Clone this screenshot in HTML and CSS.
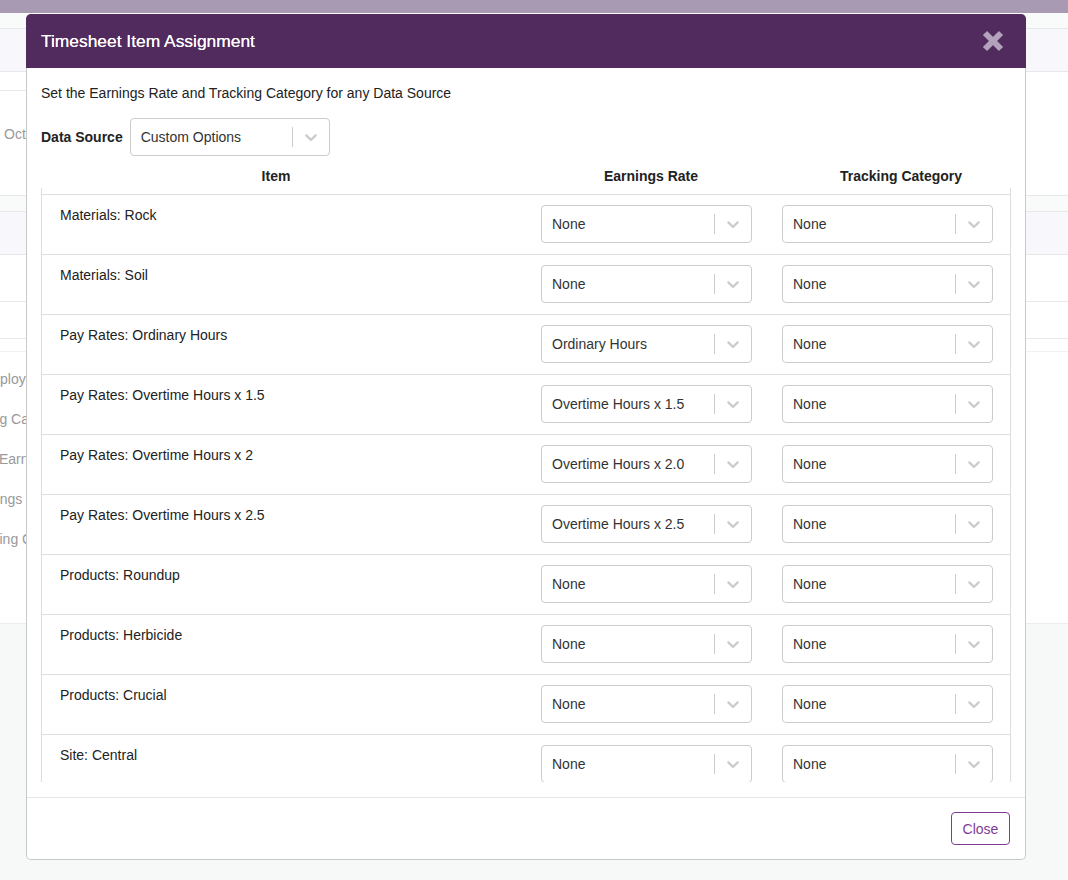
FILE: index.html
```html
<!DOCTYPE html>
<html lang="en">
<head>
  <meta charset="UTF-8" />
  <title>Timesheet Item Assignment</title>
  <link rel="stylesheet" href="styles.css">
</head>
<body>
  <div class="page">
    <div class="nav"></div>
    <div class="strip"></div>
    <div class="panel"></div>
    <div class="section">
      <div class="sub"></div>
      <div class="date">Oct</div>
    </div>
    <div class="strip"></div>
    <div class="panel"></div>
    <div class="line-row tall"></div>
    <div class="line-row"></div>
    <div class="line-row thin"></div>
    <div class="labels">
      <div class="lbl lbl-1">Employee</div>
      <div class="lbl lbl-2">Tracking Category</div>
      <div class="lbl lbl-3">Earnings</div>
      <div class="lbl lbl-4">Earnings Rate</div>
      <div class="lbl lbl-5">Tracking Category</div>
    </div>
    <div class="page-foot"></div>

    <div class="modal">
      <div class="modal-header">
        <span class="modal-title">Timesheet Item Assignment</span>
        <svg class="close-x" viewBox="0 0 22 22" width="22" height="22">
          <path d="M3 3 L19 19 M19 3 L3 19" stroke="currentColor" stroke-width="6" />
        </svg>
      </div>

      <div class="modal-body">
        <div class="desc">Set the Earnings Rate and Tracking Category for any Data Source</div>

        <div class="source-row">
          <span class="source-label">Data Source</span>
          <div class="select source-select">
            <span class="select-value">Custom Options</span>
            <span class="select-sep"></span>
            <span class="select-arrow"><svg viewBox="0 0 20 20" width="20" height="20"><path d="M4.516 7.548c0.436-0.446 1.043-0.481 1.576 0l3.908 3.747 3.908-3.747c0.533-0.481 1.141-0.446 1.574 0 0.436 0.445 0.408 1.197 0 1.615-0.406 0.418-4.695 4.502-4.695 4.502-0.217 0.223-0.502 0.335-0.787 0.335s-0.57-0.112-0.789-0.335c0 0-4.287-4.084-4.695-4.502s-0.436-1.17 0-1.615z"/></svg></span>
          </div>
        </div>

        <div class="table-head">
          <div>Item</div>
          <div>Earnings Rate</div>
          <div>Tracking Category</div>
        </div>

        <div class="table-body">
          <div class="row">
            <div class="item">Materials: Rock</div>
            <div class="select"><span class="select-value">None</span><span class="select-sep"></span><span class="select-arrow"><svg viewBox="0 0 20 20" width="20" height="20"><path d="M4.516 7.548c0.436-0.446 1.043-0.481 1.576 0l3.908 3.747 3.908-3.747c0.533-0.481 1.141-0.446 1.574 0 0.436 0.445 0.408 1.197 0 1.615-0.406 0.418-4.695 4.502-4.695 4.502-0.217 0.223-0.502 0.335-0.787 0.335s-0.57-0.112-0.789-0.335c0 0-4.287-4.084-4.695-4.502s-0.436-1.17 0-1.615z"/></svg></span></div>
            <div class="select"><span class="select-value">None</span><span class="select-sep"></span><span class="select-arrow"><svg viewBox="0 0 20 20" width="20" height="20"><path d="M4.516 7.548c0.436-0.446 1.043-0.481 1.576 0l3.908 3.747 3.908-3.747c0.533-0.481 1.141-0.446 1.574 0 0.436 0.445 0.408 1.197 0 1.615-0.406 0.418-4.695 4.502-4.695 4.502-0.217 0.223-0.502 0.335-0.787 0.335s-0.57-0.112-0.789-0.335c0 0-4.287-4.084-4.695-4.502s-0.436-1.17 0-1.615z"/></svg></span></div>
          </div>
          <div class="row">
            <div class="item">Materials: Soil</div>
            <div class="select"><span class="select-value">None</span><span class="select-sep"></span><span class="select-arrow"><svg viewBox="0 0 20 20" width="20" height="20"><path d="M4.516 7.548c0.436-0.446 1.043-0.481 1.576 0l3.908 3.747 3.908-3.747c0.533-0.481 1.141-0.446 1.574 0 0.436 0.445 0.408 1.197 0 1.615-0.406 0.418-4.695 4.502-4.695 4.502-0.217 0.223-0.502 0.335-0.787 0.335s-0.57-0.112-0.789-0.335c0 0-4.287-4.084-4.695-4.502s-0.436-1.17 0-1.615z"/></svg></span></div>
            <div class="select"><span class="select-value">None</span><span class="select-sep"></span><span class="select-arrow"><svg viewBox="0 0 20 20" width="20" height="20"><path d="M4.516 7.548c0.436-0.446 1.043-0.481 1.576 0l3.908 3.747 3.908-3.747c0.533-0.481 1.141-0.446 1.574 0 0.436 0.445 0.408 1.197 0 1.615-0.406 0.418-4.695 4.502-4.695 4.502-0.217 0.223-0.502 0.335-0.787 0.335s-0.57-0.112-0.789-0.335c0 0-4.287-4.084-4.695-4.502s-0.436-1.17 0-1.615z"/></svg></span></div>
          </div>
          <div class="row">
            <div class="item">Pay Rates: Ordinary Hours</div>
            <div class="select"><span class="select-value">Ordinary Hours</span><span class="select-sep"></span><span class="select-arrow"><svg viewBox="0 0 20 20" width="20" height="20"><path d="M4.516 7.548c0.436-0.446 1.043-0.481 1.576 0l3.908 3.747 3.908-3.747c0.533-0.481 1.141-0.446 1.574 0 0.436 0.445 0.408 1.197 0 1.615-0.406 0.418-4.695 4.502-4.695 4.502-0.217 0.223-0.502 0.335-0.787 0.335s-0.57-0.112-0.789-0.335c0 0-4.287-4.084-4.695-4.502s-0.436-1.17 0-1.615z"/></svg></span></div>
            <div class="select"><span class="select-value">None</span><span class="select-sep"></span><span class="select-arrow"><svg viewBox="0 0 20 20" width="20" height="20"><path d="M4.516 7.548c0.436-0.446 1.043-0.481 1.576 0l3.908 3.747 3.908-3.747c0.533-0.481 1.141-0.446 1.574 0 0.436 0.445 0.408 1.197 0 1.615-0.406 0.418-4.695 4.502-4.695 4.502-0.217 0.223-0.502 0.335-0.787 0.335s-0.57-0.112-0.789-0.335c0 0-4.287-4.084-4.695-4.502s-0.436-1.17 0-1.615z"/></svg></span></div>
          </div>
          <div class="row">
            <div class="item">Pay Rates: Overtime Hours x 1.5</div>
            <div class="select"><span class="select-value">Overtime Hours x 1.5</span><span class="select-sep"></span><span class="select-arrow"><svg viewBox="0 0 20 20" width="20" height="20"><path d="M4.516 7.548c0.436-0.446 1.043-0.481 1.576 0l3.908 3.747 3.908-3.747c0.533-0.481 1.141-0.446 1.574 0 0.436 0.445 0.408 1.197 0 1.615-0.406 0.418-4.695 4.502-4.695 4.502-0.217 0.223-0.502 0.335-0.787 0.335s-0.57-0.112-0.789-0.335c0 0-4.287-4.084-4.695-4.502s-0.436-1.17 0-1.615z"/></svg></span></div>
            <div class="select"><span class="select-value">None</span><span class="select-sep"></span><span class="select-arrow"><svg viewBox="0 0 20 20" width="20" height="20"><path d="M4.516 7.548c0.436-0.446 1.043-0.481 1.576 0l3.908 3.747 3.908-3.747c0.533-0.481 1.141-0.446 1.574 0 0.436 0.445 0.408 1.197 0 1.615-0.406 0.418-4.695 4.502-4.695 4.502-0.217 0.223-0.502 0.335-0.787 0.335s-0.57-0.112-0.789-0.335c0 0-4.287-4.084-4.695-4.502s-0.436-1.17 0-1.615z"/></svg></span></div>
          </div>
          <div class="row">
            <div class="item">Pay Rates: Overtime Hours x 2</div>
            <div class="select"><span class="select-value">Overtime Hours x 2.0</span><span class="select-sep"></span><span class="select-arrow"><svg viewBox="0 0 20 20" width="20" height="20"><path d="M4.516 7.548c0.436-0.446 1.043-0.481 1.576 0l3.908 3.747 3.908-3.747c0.533-0.481 1.141-0.446 1.574 0 0.436 0.445 0.408 1.197 0 1.615-0.406 0.418-4.695 4.502-4.695 4.502-0.217 0.223-0.502 0.335-0.787 0.335s-0.57-0.112-0.789-0.335c0 0-4.287-4.084-4.695-4.502s-0.436-1.17 0-1.615z"/></svg></span></div>
            <div class="select"><span class="select-value">None</span><span class="select-sep"></span><span class="select-arrow"><svg viewBox="0 0 20 20" width="20" height="20"><path d="M4.516 7.548c0.436-0.446 1.043-0.481 1.576 0l3.908 3.747 3.908-3.747c0.533-0.481 1.141-0.446 1.574 0 0.436 0.445 0.408 1.197 0 1.615-0.406 0.418-4.695 4.502-4.695 4.502-0.217 0.223-0.502 0.335-0.787 0.335s-0.57-0.112-0.789-0.335c0 0-4.287-4.084-4.695-4.502s-0.436-1.17 0-1.615z"/></svg></span></div>
          </div>
          <div class="row">
            <div class="item">Pay Rates: Overtime Hours x 2.5</div>
            <div class="select"><span class="select-value">Overtime Hours x 2.5</span><span class="select-sep"></span><span class="select-arrow"><svg viewBox="0 0 20 20" width="20" height="20"><path d="M4.516 7.548c0.436-0.446 1.043-0.481 1.576 0l3.908 3.747 3.908-3.747c0.533-0.481 1.141-0.446 1.574 0 0.436 0.445 0.408 1.197 0 1.615-0.406 0.418-4.695 4.502-4.695 4.502-0.217 0.223-0.502 0.335-0.787 0.335s-0.57-0.112-0.789-0.335c0 0-4.287-4.084-4.695-4.502s-0.436-1.17 0-1.615z"/></svg></span></div>
            <div class="select"><span class="select-value">None</span><span class="select-sep"></span><span class="select-arrow"><svg viewBox="0 0 20 20" width="20" height="20"><path d="M4.516 7.548c0.436-0.446 1.043-0.481 1.576 0l3.908 3.747 3.908-3.747c0.533-0.481 1.141-0.446 1.574 0 0.436 0.445 0.408 1.197 0 1.615-0.406 0.418-4.695 4.502-4.695 4.502-0.217 0.223-0.502 0.335-0.787 0.335s-0.57-0.112-0.789-0.335c0 0-4.287-4.084-4.695-4.502s-0.436-1.17 0-1.615z"/></svg></span></div>
          </div>
          <div class="row">
            <div class="item">Products: Roundup</div>
            <div class="select"><span class="select-value">None</span><span class="select-sep"></span><span class="select-arrow"><svg viewBox="0 0 20 20" width="20" height="20"><path d="M4.516 7.548c0.436-0.446 1.043-0.481 1.576 0l3.908 3.747 3.908-3.747c0.533-0.481 1.141-0.446 1.574 0 0.436 0.445 0.408 1.197 0 1.615-0.406 0.418-4.695 4.502-4.695 4.502-0.217 0.223-0.502 0.335-0.787 0.335s-0.57-0.112-0.789-0.335c0 0-4.287-4.084-4.695-4.502s-0.436-1.17 0-1.615z"/></svg></span></div>
            <div class="select"><span class="select-value">None</span><span class="select-sep"></span><span class="select-arrow"><svg viewBox="0 0 20 20" width="20" height="20"><path d="M4.516 7.548c0.436-0.446 1.043-0.481 1.576 0l3.908 3.747 3.908-3.747c0.533-0.481 1.141-0.446 1.574 0 0.436 0.445 0.408 1.197 0 1.615-0.406 0.418-4.695 4.502-4.695 4.502-0.217 0.223-0.502 0.335-0.787 0.335s-0.57-0.112-0.789-0.335c0 0-4.287-4.084-4.695-4.502s-0.436-1.17 0-1.615z"/></svg></span></div>
          </div>
          <div class="row">
            <div class="item">Products: Herbicide</div>
            <div class="select"><span class="select-value">None</span><span class="select-sep"></span><span class="select-arrow"><svg viewBox="0 0 20 20" width="20" height="20"><path d="M4.516 7.548c0.436-0.446 1.043-0.481 1.576 0l3.908 3.747 3.908-3.747c0.533-0.481 1.141-0.446 1.574 0 0.436 0.445 0.408 1.197 0 1.615-0.406 0.418-4.695 4.502-4.695 4.502-0.217 0.223-0.502 0.335-0.787 0.335s-0.57-0.112-0.789-0.335c0 0-4.287-4.084-4.695-4.502s-0.436-1.17 0-1.615z"/></svg></span></div>
            <div class="select"><span class="select-value">None</span><span class="select-sep"></span><span class="select-arrow"><svg viewBox="0 0 20 20" width="20" height="20"><path d="M4.516 7.548c0.436-0.446 1.043-0.481 1.576 0l3.908 3.747 3.908-3.747c0.533-0.481 1.141-0.446 1.574 0 0.436 0.445 0.408 1.197 0 1.615-0.406 0.418-4.695 4.502-4.695 4.502-0.217 0.223-0.502 0.335-0.787 0.335s-0.57-0.112-0.789-0.335c0 0-4.287-4.084-4.695-4.502s-0.436-1.17 0-1.615z"/></svg></span></div>
          </div>
          <div class="row">
            <div class="item">Products: Crucial</div>
            <div class="select"><span class="select-value">None</span><span class="select-sep"></span><span class="select-arrow"><svg viewBox="0 0 20 20" width="20" height="20"><path d="M4.516 7.548c0.436-0.446 1.043-0.481 1.576 0l3.908 3.747 3.908-3.747c0.533-0.481 1.141-0.446 1.574 0 0.436 0.445 0.408 1.197 0 1.615-0.406 0.418-4.695 4.502-4.695 4.502-0.217 0.223-0.502 0.335-0.787 0.335s-0.57-0.112-0.789-0.335c0 0-4.287-4.084-4.695-4.502s-0.436-1.17 0-1.615z"/></svg></span></div>
            <div class="select"><span class="select-value">None</span><span class="select-sep"></span><span class="select-arrow"><svg viewBox="0 0 20 20" width="20" height="20"><path d="M4.516 7.548c0.436-0.446 1.043-0.481 1.576 0l3.908 3.747 3.908-3.747c0.533-0.481 1.141-0.446 1.574 0 0.436 0.445 0.408 1.197 0 1.615-0.406 0.418-4.695 4.502-4.695 4.502-0.217 0.223-0.502 0.335-0.787 0.335s-0.57-0.112-0.789-0.335c0 0-4.287-4.084-4.695-4.502s-0.436-1.17 0-1.615z"/></svg></span></div>
          </div>
          <div class="row">
            <div class="item">Site: Central</div>
            <div class="select"><span class="select-value">None</span><span class="select-sep"></span><span class="select-arrow"><svg viewBox="0 0 20 20" width="20" height="20"><path d="M4.516 7.548c0.436-0.446 1.043-0.481 1.576 0l3.908 3.747 3.908-3.747c0.533-0.481 1.141-0.446 1.574 0 0.436 0.445 0.408 1.197 0 1.615-0.406 0.418-4.695 4.502-4.695 4.502-0.217 0.223-0.502 0.335-0.787 0.335s-0.57-0.112-0.789-0.335c0 0-4.287-4.084-4.695-4.502s-0.436-1.17 0-1.615z"/></svg></span></div>
            <div class="select"><span class="select-value">None</span><span class="select-sep"></span><span class="select-arrow"><svg viewBox="0 0 20 20" width="20" height="20"><path d="M4.516 7.548c0.436-0.446 1.043-0.481 1.576 0l3.908 3.747 3.908-3.747c0.533-0.481 1.141-0.446 1.574 0 0.436 0.445 0.408 1.197 0 1.615-0.406 0.418-4.695 4.502-4.695 4.502-0.217 0.223-0.502 0.335-0.787 0.335s-0.57-0.112-0.789-0.335c0 0-4.287-4.084-4.695-4.502s-0.436-1.17 0-1.615z"/></svg></span></div>
          </div>
        </div>
      </div>

      <div class="modal-footer">
        <button class="btn">Close</button>
      </div>
    </div>
  </div>
</body>
</html>
```

FILE: styles.css
```css
* {
  box-sizing: border-box;
}

body {
  margin: 0;
  font-family: "Liberation Sans", Arial, sans-serif;
  font-size: 14px;
  color: #222;
  background: #fff;
}

.page {
  position: relative;
  height: 880px;
  overflow: hidden;
  display: flex;
  flex-direction: column;
}

/* page behind the modal */
.nav {
  height: 13px;
  background: #a99ab4;
}

.strip {
  height: 16px;
  background: #f9fafa;
  border-bottom: 1px solid #e8e8e8;
}

.panel {
  height: 43px;
  background: #f8f7fb;
  border-bottom: 1px solid #e8e8e8;
}

.section {
  height: 124px;
  border-bottom: 1px solid #e8e8e8;
}

.sub {
  height: 19px;
  width: 40%;
  border-bottom: 1px solid #e8e8e8;
}

.date {
  margin-top: 33px;
  padding-left: 4px;
  line-height: 20px;
  color: #999;
}

.line-row {
  height: 37px;
  border-bottom: 1px solid #e8e8e8;
}

.line-row.tall {
  height: 47px;
}

.line-row.thin {
  height: 13px;
  border-bottom-color: #f1f1f1;
}

.labels {
  height: 272px;
  padding-top: 7px;
  border-bottom: 1px solid #ececec;
}

.lbl {
  line-height: 40px;
  color: #999;
  white-space: nowrap;
}

.lbl-1 { text-indent: -21px; }
.lbl-2 { text-indent: -46px; }
.lbl-3 { text-indent: -1px; }
.lbl-4 { text-indent: -33px; }
.lbl-5 { text-indent: -35px; }

.page-foot {
  flex: 1;
  background: #f7f8f8;
}

/* modal */
.modal {
  position: absolute;
  top: 14px;
  left: 26px;
  width: 1000px;
  background: #fff;
  border: 1px solid #c9c9c9;
  border-top: 0;
  border-radius: 5px;
}

.modal-header {
  margin: 0 -1px;
  padding: 15px 22px 15px 15px;
  background: #512a5e;
  border-radius: 5px 5px 0 0;
  color: #fff;
  display: flex;
  justify-content: space-between;
  align-items: center;
}

.modal-title {
  font-size: 17.4px;
  line-height: 24px;
  text-shadow: 0 0 0.4px #fff;
}

.close-x {
  display: block;
  color: #b3a2bb;
}

.modal-body {
  padding: 15px 14px 15px;
}

.desc {
  line-height: 20px;
  margin-bottom: 15px;
}

.source-row {
  display: flex;
  align-items: center;
  gap: 7px;
}

.source-label {
  font-weight: bold;
}

.source-select {
  width: 200px;
}

.select {
  height: 38px;
  background: #fff;
  border: 1px solid #ccc;
  border-radius: 4px;
  display: flex;
  align-items: center;
}

.select-value {
  flex: 1;
  padding: 0 10px;
  color: #333;
  white-space: nowrap;
  overflow: hidden;
}

.select-sep {
  align-self: stretch;
  width: 1px;
  margin: 8px 0;
  background: #ccc;
}

.select-arrow {
  display: flex;
  padding: 8px;
  color: #ccc;
}

.select-arrow svg {
  fill: currentColor;
}

.table-head {
  display: grid;
  grid-template-columns: 470px 280px 1fr;
  padding: 10px 0 2px;
  line-height: 20px;
  font-weight: bold;
  text-align: center;
}

.table-body {
  height: 594px;
  overflow: hidden;
  padding-top: 6px;
  border-left: 1px solid #ddd;
  border-right: 1px solid #ddd;
}

.row {
  height: 60px;
  display: grid;
  grid-template-columns: 1fr 211px 211px;
  column-gap: 30px;
  padding: 10px 17px 11px 18px;
  border-top: 1px solid #dedede;
}

.item {
  line-height: 20px;
}

.modal-footer {
  padding: 14px 15px;
  border-top: 1px solid #e5e5e5;
  display: flex;
  justify-content: flex-end;
}

.btn {
  width: 59px;
  height: 33px;
  padding: 0;
  background: #fff;
  border: 1px solid #7d3c98;
  border-radius: 4px;
  color: #7d3c98;
  font-family: inherit;
  font-size: 14px;
  cursor: pointer;
}
```
